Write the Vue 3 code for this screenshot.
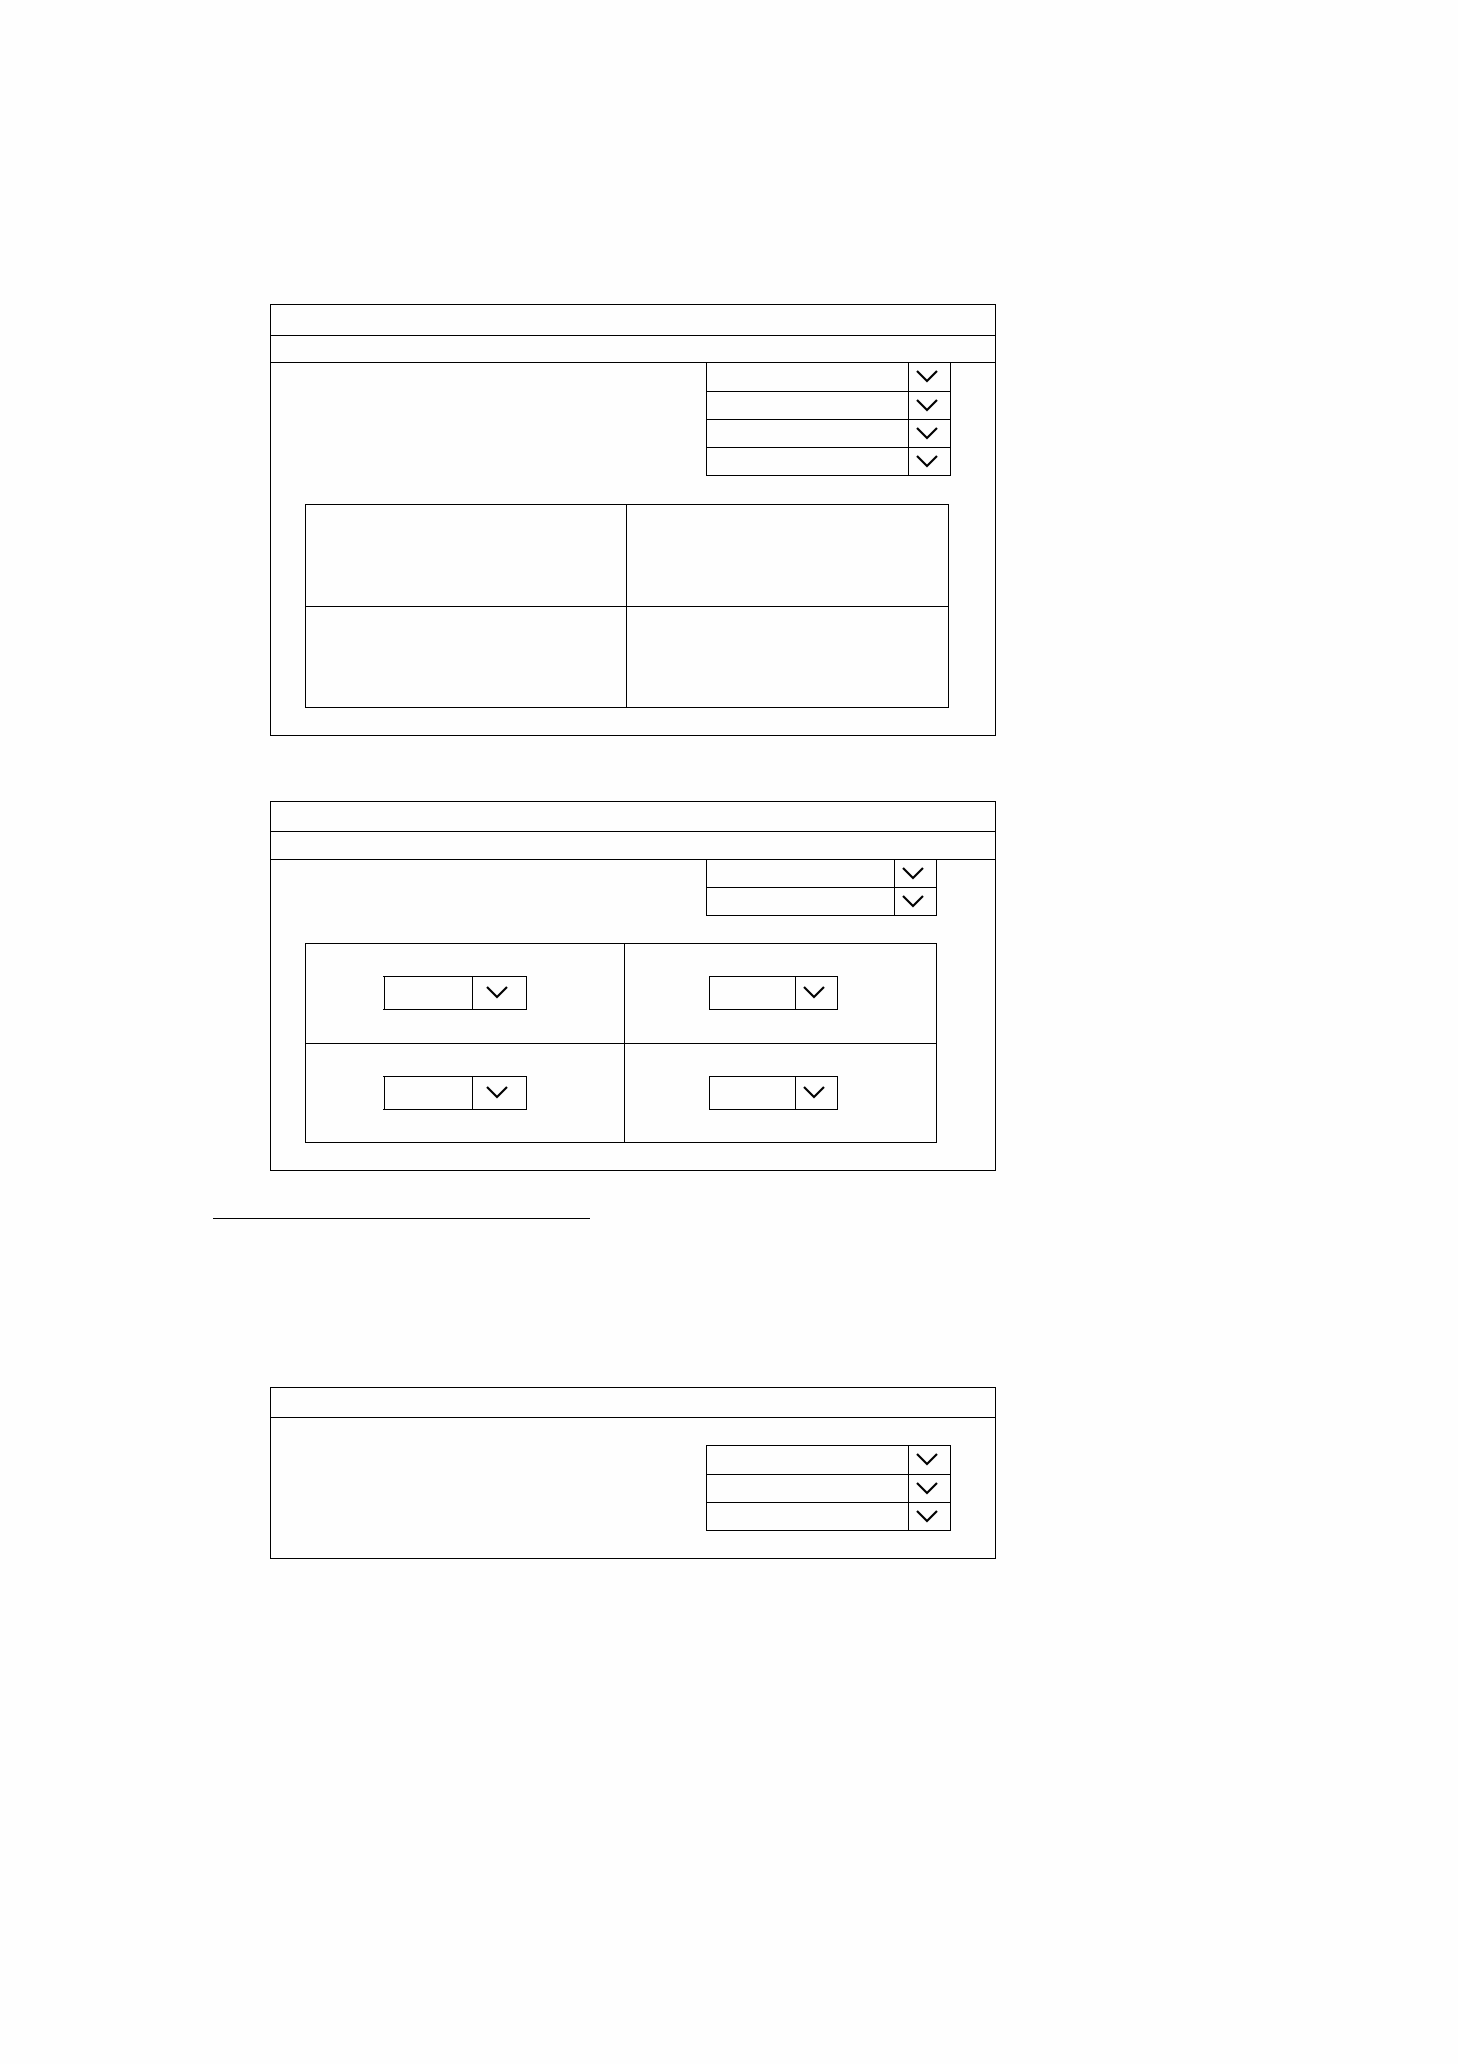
<template>
  <main class="page">
    <template v-for="panel in panels" :key="panel.id">
      <hr v-if="panel.ruleBefore" class="rule" />
      <section class="panel" :class="panel.id">
        <div class="title"></div>
        <div v-if="panel.subtitle" class="subtitle"></div>

        <div class="fields">
          <div v-for="n in panel.fields" :key="n" class="field">
            <select v-model="values[`${panel.id}-${n}`]" :aria-label="`Field ${n}`">
              <option value=""></option>
            </select>
            <span class="arrow">
              <svg viewBox="0 0 22 14" width="22" height="14" aria-hidden="true">
                <path d="M1 1L11 11L21 1" />
              </svg>
            </span>
          </div>
        </div>

        <div v-if="panel.table" class="table-wrap">
          <table>
            <tbody>
              <tr v-for="row in 2" :key="row">
                <td v-for="col in 2" :key="col">
                  <div v-if="panel.cellFields" class="cell-field">
                    <div class="field">
                      <select v-model="values[`${panel.id}-${row}-${col}`]" :aria-label="`Row ${row}, column ${col}`">
                        <option value=""></option>
                      </select>
                      <span class="arrow">
                        <svg viewBox="0 0 22 14" width="22" height="14" aria-hidden="true">
                          <path d="M1 1L11 11L21 1" />
                        </svg>
                      </span>
                    </div>
                  </div>
                </td>
              </tr>
            </tbody>
          </table>
        </div>
      </section>
    </template>
  </main>
</template>

<script setup>
import { reactive } from 'vue'

const panels = [
  { id: 'overview', subtitle: true, fields: 4, table: true },
  { id: 'matrix', subtitle: true, fields: 2, table: true, cellFields: true },
  { id: 'summary', fields: 3, ruleBefore: true }
]

// 每个下拉框的值，默认都为空
const values = reactive({})
panels.forEach((panel) => {
  for (let n = 1; n <= panel.fields; n++) {
    values[`${panel.id}-${n}`] = ''
  }
  if (panel.cellFields) {
    for (let row = 1; row <= 2; row++) {
      for (let col = 1; col <= 2; col++) {
        values[`${panel.id}-${row}-${col}`] = ''
      }
    }
  }
})
</script>

<style>
body {
  margin: 0;
  background: #fefefe;
}
</style>

<style scoped>
* {
  box-sizing: border-box;
}

.page {
  padding: 304px 462px 304px 213px;
  font-family: "Liberation Sans", Arial, sans-serif;
  font-size: 14px;
  color: #000;
}

.panel {
  margin-left: 57px;
  padding-bottom: 27px;
  border: 1px solid #000;
}

.matrix {
  margin-top: 65px;
}

/* 第二、三块之间的短分隔线 */
.rule {
  width: 377px;
  max-width: 100%;
  height: 0;
  margin: 47px 0 168px;
  border: 0;
  border-top: 1px solid #000;
}

.title {
  height: 30px;
  border-bottom: 1px solid #000;
}

.subtitle {
  height: 28px;
  border-bottom: 1px solid #000;
}

.overview .title {
  height: 31px;
}

.overview .subtitle {
  height: 27px;
}

.fields {
  margin: 0 44px 0 435px;
}

.matrix .fields {
  margin-right: 58px;
}

.summary .fields {
  margin-top: 27px;
  border-top: 1px solid #000;
}

.field {
  display: grid;
  grid-template-columns: 1fr 42px;
  height: 28px;
  border: 1px solid #000;
  border-top: 0;
}

.overview .field:first-child,
.summary .field:first-child {
  height: 29px;
}

select {
  grid-area: 1 / 1 / 2 / 3;
  width: 100%;
  min-width: 0;
  height: 100%;
  margin: 0;
  padding: 0 48px 0 6px;
  border: 0;
  border-radius: 0;
  background: transparent;
  font: inherit;
  color: inherit;
  appearance: none;
}

.arrow {
  grid-area: 1 / 2 / 2 / 3;
  display: flex;
  align-items: center;
  justify-content: center;
  padding-right: 5px;
  border-left: 1px solid #000;
  pointer-events: none;
}

.arrow path {
  fill: none;
  stroke: #000;
  stroke-width: 2.2;
}

.table-wrap {
  margin: 28px 46px 0 34px;
}

.matrix .table-wrap {
  margin: 27px 58px 0 34px;
}

table {
  width: 100%;
  table-layout: fixed;
  border-spacing: 0;
  border-top: 1px solid #000;
  border-left: 1px solid #000;
}

td {
  height: 102px;
  padding: 0;
  border-right: 1px solid #000;
  border-bottom: 1px solid #000;
  vertical-align: top;
}

tr:last-child td {
  height: 101px;
}

td:first-child {
  width: 321px;
}

.matrix td {
  height: 100px;
  padding: 32px 98px 0 84px;
}

.matrix tr:last-child td {
  height: 99px;
}

.matrix td:first-child {
  width: 319px;
  padding: 32px 97px 0 77px;
}

/* 单元格内的下拉框，上下边框由外层画 */
.cell-field {
  border-top: 1px solid #000;
  border-bottom: 1px solid #000;
}

.cell-field .field {
  height: 32px;
  border-top: 0;
  border-bottom: 0;
}

td:first-child .cell-field {
  padding-left: 1px;
}

td:first-child .field {
  grid-template-columns: 1fr 54px;
}
</style>
